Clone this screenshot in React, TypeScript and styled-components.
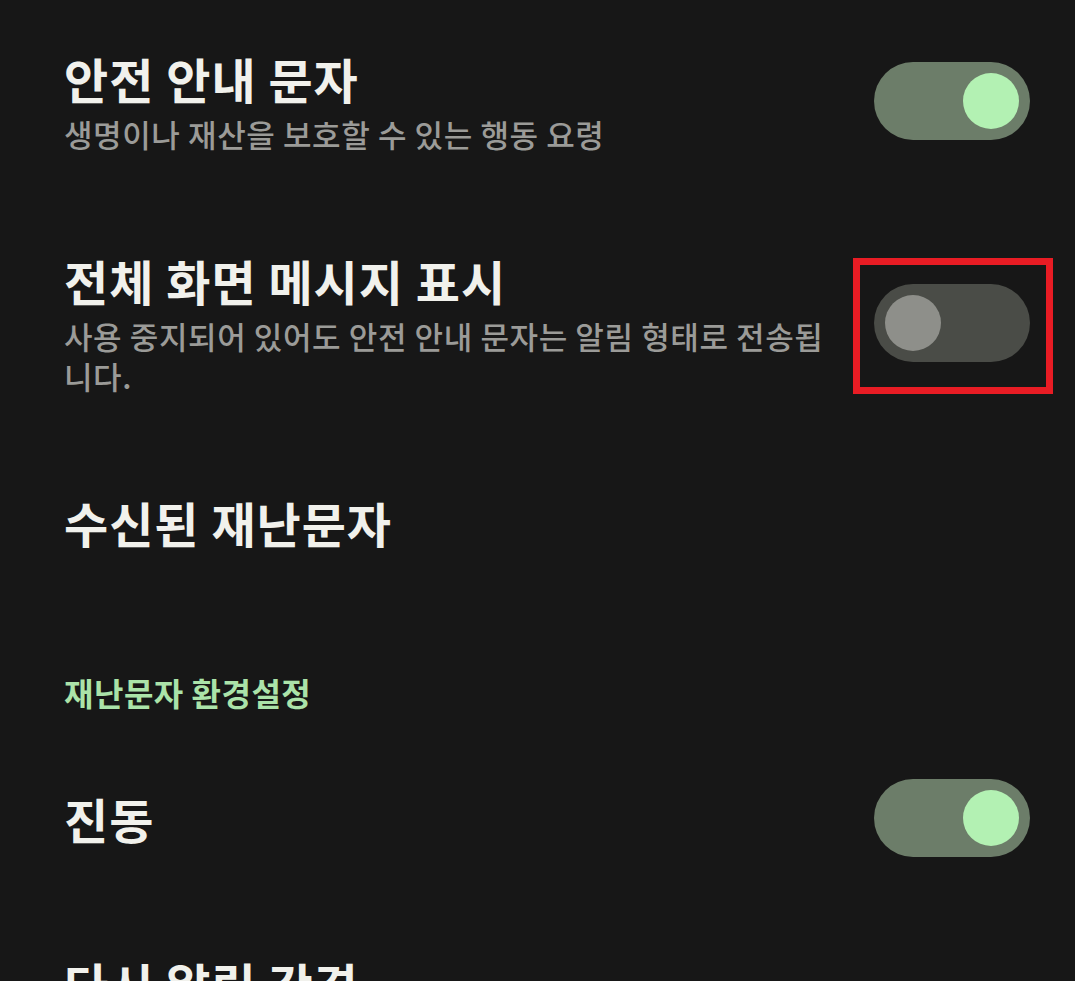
import React from "react";
import styled, { createGlobalStyle } from "styled-components";

const GlobalStyle = createGlobalStyle`
  html, body {
    margin: 0;
    padding: 0;
    background: #171717;
  }
  body {
    font-family: "Noto Sans CJK KR", "Noto Sans", sans-serif;
    overflow: hidden;
  }
`;

const Page = styled.div`
  width: 1075px;
  height: 981px;
  box-sizing: border-box;
  padding: 0 45px 0 64px;
  background: #171717;
  overflow: hidden;
`;

const Row = styled.div`
  display: flex;
  align-items: center;
  padding: 48px 0;
`;

const TextBlock = styled.div`
  flex: 1;
  min-width: 0;
  padding-right: 35px;
`;

const Title = styled.div`
  color: #f1f1ec;
  font-size: 48px;
  font-weight: 700;
  letter-spacing: 1px;
  line-height: 60px;
`;

const Summary = styled.div`
  color: #9b9b98;
  font-size: 31px;
  font-weight: 500;
  letter-spacing: 0.6px;
  line-height: 40px;
  margin-top: 6px;
`;

const Category = styled.div`
  color: #abe3a9;
  font-size: 32px;
  font-weight: 700;
  letter-spacing: 0.5px;
  line-height: 40px;
  padding: 72px 0 19px;
`;

const Track = styled.div<{ $on: boolean }>`
  position: relative;
  flex: none;
  width: 156px;
  height: 78px;
  border-radius: 39px;
  box-sizing: border-box;
  padding: 0 11px;
  display: flex;
  align-items: center;
  justify-content: ${(p) => (p.$on ? "flex-end" : "flex-start")};
  background: ${(p) => (p.$on ? "#6c7d69" : "#4a4c47")};
`;

const Thumb = styled.div<{ $on: boolean }>`
  width: 56px;
  height: 56px;
  border-radius: 50%;
  background: ${(p) => (p.$on ? "#b3f1b3" : "#8e8f8a")};
`;

const Highlight = styled.div`
  position: absolute;
  left: -21px;
  right: -23px;
  top: -26px;
  bottom: -32px;
  border: 7px solid #e81c24;
  pointer-events: none;
`;

function Toggle({ on, marked }: { on: boolean; marked?: boolean }) {
  return (
    <Track $on={on}>
      <Thumb $on={on} />
      {marked && <Highlight />}
    </Track>
  );
}

export default function App() {
  return (
    <>
      <GlobalStyle />
      <Page>
        <Row>
          <TextBlock>
            <Title>안전 안내 문자</Title>
            <Summary>생명이나 재산을 보호할 수 있는 행동 요령</Summary>
          </TextBlock>
          <Toggle on />
        </Row>
        <Row>
          <TextBlock>
            <Title>전체 화면 메시지 표시</Title>
            <Summary>
              사용 중지되어 있어도 안전 안내 문자는 알림 형태로 전송됩니다.
            </Summary>
          </TextBlock>
          <Toggle on={false} marked />
        </Row>
        <Row>
          <TextBlock>
            <Title>수신된 재난문자</Title>
          </TextBlock>
        </Row>
        <Category>재난문자 환경설정</Category>
        <Row>
          <TextBlock>
            <Title>진동</Title>
          </TextBlock>
          <Toggle on />
        </Row>
        <Row>
          <TextBlock>
            <Title>다시 알림 간격</Title>
          </TextBlock>
        </Row>
      </Page>
    </>
  );
}
